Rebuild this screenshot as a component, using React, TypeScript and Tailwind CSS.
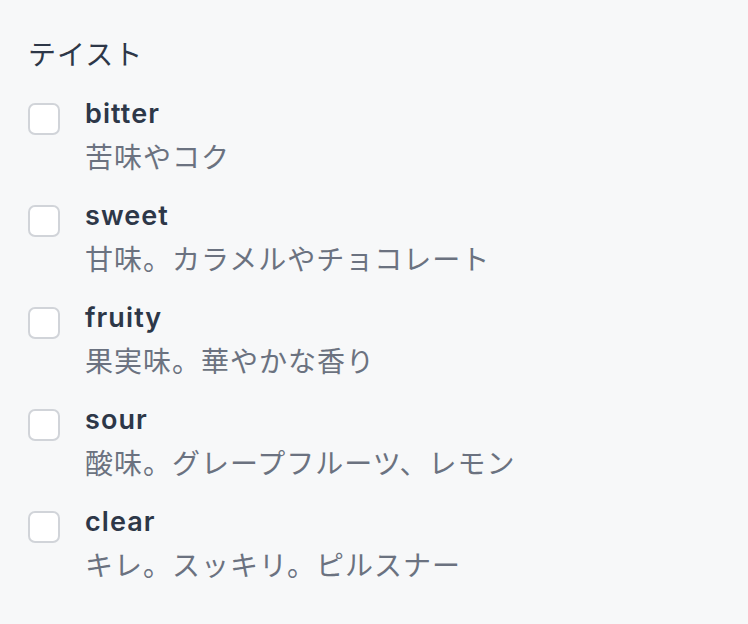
const tastes = [
  { value: "bitter", note: "苦味やコク" },
  { value: "sweet", note: "甘味。カラメルやチョコレート" },
  { value: "fruity", note: "果実味。華やかな香り" },
  { value: "sour", note: "酸味。グレープフルーツ、レモン" },
  { value: "clear", note: "キレ。スッキリ。ピルスナー" },
];

function TasteOption({ value, note }: { value: string; note: string }) {
  return (
    <label className="flex items-start gap-[25px]">
      <input
        type="checkbox"
        className="mt-[11px] h-[32px] w-[32px] shrink-0 appearance-none rounded-[7px] border-2 border-[#d1d4d9] bg-white"
      />
      <div className="flex flex-col">
        <span className="text-[27px] leading-[44px] font-semibold tracking-[0.04em] text-[#2d3748]">{value}</span>
        <span className="text-[28px] leading-[44px] tracking-[1px] text-[#6b7280]">{note}</span>
      </div>
    </label>
  );
}

export default function App() {
  return (
    <div
      className="min-h-screen w-full bg-[#f7f8f9] px-[28px] pt-[35px]"
      style={{ fontFamily: '"Inter", "Noto Sans CJK JP", sans-serif' }}
    >
      <h2 className="text-[28px] leading-[40px] font-normal tracking-[1px] text-[#2d3748]">テイスト</h2>
      <div className="mt-[17px] flex flex-col gap-[14px]">
        {tastes.map((t) => (
          <TasteOption key={t.value} value={t.value} note={t.note} />
        ))}
      </div>
    </div>
  );
}
